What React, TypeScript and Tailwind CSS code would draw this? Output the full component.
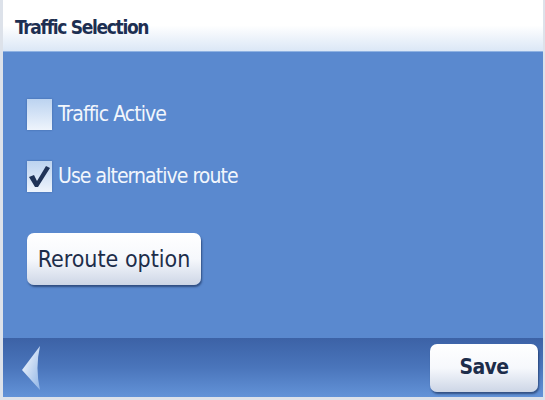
import React from 'react';

const font = { fontFamily: '"DejaVu Sans Condensed", "DejaVu Sans", "Liberation Sans", sans-serif' };

function Checkbox({ checked }: { checked: boolean }) {
    return (
        <div className="w-[25px] h-[31px] bg-gradient-to-b from-[#bcd3f0] to-[#eef4fc] shadow-[0_0_2px_rgba(30,60,110,0.4)] flex items-center justify-center">
            {checked && (
                <svg width="23" height="24" viewBox="0 0 23 24">
                    <path d="M1 12 L6 10 L9 16 L18 1 L22 3 L10 22 L7 22 Z" fill="#1f3358" />
                </svg>
            )}
        </div>
    );
}

export default function App() {
    return (
        <div className="w-[545px] h-[400px] flex flex-col border-l-[3px] border-r-[2px] border-[#dde2ea] bg-[#5a89cf] overflow-hidden" style={font}>
            <div className="h-[51px] shrink-0 bg-gradient-to-b from-white via-white to-[#dbe7f6] flex items-center pl-[12px] pt-[3px]">
                <span className="text-[19px] font-bold tracking-[-0.07em] text-[#1d2f52]">Traffic Selection</span>
            </div>
            <div className="flex-1 flex flex-col pl-[24px] pt-[47px] border-t border-[#8fb2e2]">
                <div className="flex items-center gap-[6px]">
                    <Checkbox checked={false} />
                    <span className="text-[21px] leading-none tracking-[-0.045em] text-[#f2f6fc]">Traffic Active</span>
                </div>
                <div className="flex items-center gap-[6px] mt-[31px]">
                    <Checkbox checked={true} />
                    <span className="text-[21px] leading-none tracking-[-0.045em] text-[#f2f6fc]">Use alternative route</span>
                </div>
                <button className="mt-[41px] w-[174px] h-[52px] rounded-[7px] bg-gradient-to-b from-white via-[#f6f8fc] to-[#cdd6e6] shadow-[1px_2px_2px_rgba(20,40,80,0.6)] text-[23px] text-[#1d2d4a] flex items-center justify-center">
                    Reroute option
                </button>
            </div>
            <div className="h-[59px] shrink-0 bg-gradient-to-b from-[#3c62a6] via-[#4a75bb] to-[#6393d8] flex items-center justify-between pl-[17px] pr-[5px]">
                <svg width="22" height="48" viewBox="0 0 22 48">
                    <defs>
                        <linearGradient id="arr" x1="0" y1="0" x2="1" y2="1">
                            <stop offset="0" stopColor="#ffffff" />
                            <stop offset="1" stopColor="#8fb4e6" />
                        </linearGradient>
                    </defs>
                    <path d="M20 2 L2 26 L20 46 Q15 24 20 2 Z" fill="url(#arr)" />
                </svg>
                <button className="w-[108px] h-[48px] rounded-[7px] bg-gradient-to-b from-white via-[#f6f8fc] to-[#cdd6e6] shadow-[1px_2px_2px_rgba(20,40,80,0.6)] text-[21px] font-bold tracking-[-0.03em] text-[#1d2d4a] flex items-center justify-center">
                    Save
                </button>
            </div>
            <div className="h-[3px] shrink-0 bg-[#dde2ea]" />
        </div>
    );
}
